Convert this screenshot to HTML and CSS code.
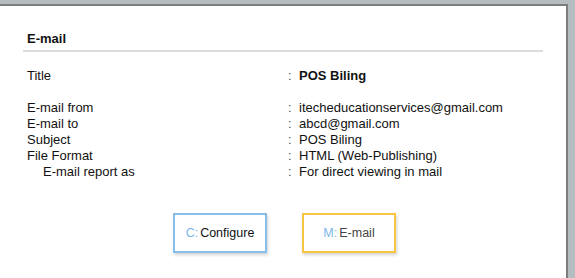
FILE: index.html
```html
<!DOCTYPE html>
<html>
<head>
<meta charset="utf-8">
<link rel="stylesheet" href="styles.css">
</head>
<body>
<div class="window">
  <div class="panel">
    <div class="heading">E-mail</div>
    <div class="rows">
      <div class="label">Title</div><div class="colon">:</div><div class="value strong">POS Biling</div>
      <div class="spacer"></div>
      <div class="label">E-mail from</div><div class="colon">:</div><div class="value">itecheducationservices@gmail.com</div>
      <div class="label">E-mail to</div><div class="colon">:</div><div class="value">abcd@gmail.com</div>
      <div class="label">Subject</div><div class="colon">:</div><div class="value">POS Biling</div>
      <div class="label">File Format</div><div class="colon">:</div><div class="value">HTML (Web-Publishing)</div>
      <div class="label sub">E-mail report as</div><div class="colon">:</div><div class="value">For direct viewing in mail</div>
    </div>
    <div class="actions">
      <div class="btn btn-config"><span class="key">C:</span>Configure</div>
      <div class="btn btn-email"><span class="key">M:</span>E-mail</div>
    </div>
  </div>
</div>
</body>
</html>
```

FILE: styles.css
```css
html, body {
  margin: 0;
  padding: 0;
}
body {
  background: #b5bdc0;
  width: 575px;
  height: 278px;
  overflow: hidden;
  font-family: "Liberation Sans", Arial, sans-serif;
  color: #111;
}
.window {
  margin-top: 4px;
  width: 566px;
  height: 280px;
  background: #fff;
  border-top: 2px solid #7d7d7d;
  border-right: 2px solid #7d7d7d;
}
.panel {
  padding: 25px 0 0 23px;
  width: 520px;
}
.heading {
  font-size: 13px;
  font-weight: bold;
  line-height: 16px;
  padding-left: 4px;
  padding-bottom: 3px;
  border-bottom: 2px solid #dcdcdc;
}
.rows {
  margin-top: 16px;
  padding-left: 4px;
  display: grid;
  grid-template-columns: 261px 11px auto;
  font-size: 13px;
  line-height: 16px;
}
.spacer {
  grid-column: 1 / 4;
  height: 16px;
}
.colon {
  color: #555;
}
.strong {
  font-weight: bold;
}
.sub {
  padding-left: 16px;
}
.actions {
  box-sizing: border-box;
  margin-top: 33px;
  margin-left: -23px;
  width: 566px;
  padding-left: 3px;
  display: flex;
  justify-content: center;
  gap: 35px;
}
.btn {
  box-sizing: border-box;
  width: 94px;
  height: 40px;
  display: flex;
  align-items: center;
  justify-content: center;
  font-size: 12.5px;
  background: #fff;
  box-shadow: 1px 2px 3px rgba(0,0,0,0.18);
}
.btn-config {
  border: 2px solid #86bfec;
  color: #111;
}
.btn-email {
  border: 2px solid #f7c443;
  color: #444;
}
.key {
  color: #7ab6ea;
  margin-right: 2px;
}
```
